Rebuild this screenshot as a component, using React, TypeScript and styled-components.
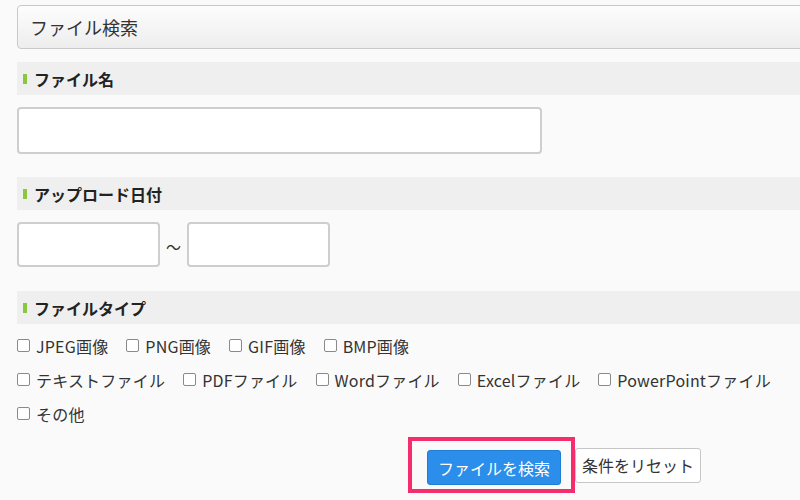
import styled, { createGlobalStyle } from "styled-components";

const GlobalStyle = createGlobalStyle`
  html, body {
    margin: 0;
    padding: 0;
    background: #fafafa;
    overflow: hidden;
  }
  body {
    font-family: "Noto Sans CJK JP", "Noto Sans", sans-serif;
    color: #333;
  }
`;

const Page = styled.div`
  padding: 5px 0 0 17px;
  margin-right: -30px;
`;

const TitleBar = styled.div`
  height: 42px;
  display: flex;
  align-items: center;
  padding-left: 12px;
  border: 1px solid #c9c9c9;
  border-radius: 4px;
  background: linear-gradient(#fdfdfd, #ededed);
  font-size: 18px;
  color: #333;
  margin-bottom: 13px;
`;

const SectionHeader = styled.div<{ $top?: number; $bottom?: number }>`
  height: 33px;
  display: flex;
  align-items: center;
  padding-left: 6px;
  background: #efefef;
  font-size: 16px;
  font-weight: bold;
  color: #222;
  margin-top: ${(p) => p.$top ?? 0}px;
  margin-bottom: ${(p) => p.$bottom ?? 12}px;

  &::before {
    content: "";
    width: 4px;
    height: 10px;
    background: #8cc63f;
    margin-right: 7px;
  }
`;

const TextInput = styled.input<{ $w: number; $h: number }>`
  box-sizing: border-box;
  width: ${(p) => p.$w}px;
  height: ${(p) => p.$h}px;
  border: 2px solid #cecece;
  border-radius: 4px;
  background: #fff;
  display: block;
  outline: none;
`;

const DateRow = styled.div`
  display: flex;
  align-items: center;
  gap: 6px;
`;

const Tilde = styled.span`
  font-size: 15px;
  width: 15px;
  text-align: center;
  padding-top: 4px;
`;

const CheckList = styled.div`
  display: flex;
  flex-direction: column;
  gap: 13px;
`;

const CheckRow = styled.div`
  display: flex;
  align-items: center;
`;

const CheckItem = styled.label`
  display: flex;
  align-items: center;
  gap: 6px;
  margin-right: 18px;
  font-size: 16px;
  height: 21px;
  color: #333;
  white-space: nowrap;
  letter-spacing: 0.2px;
`;

const Box = styled.input`
  appearance: none;
  margin: 0;
  width: 13px;
  height: 13px;
  border: 1px solid #8a8a8a;
  border-radius: 2px;
  background: #fff;
`;

const ButtonRow = styled.div`
  display: flex;
  align-items: center;
  padding-left: 391px;
  margin-top: 13px;
`;

const Highlight = styled.div`
  border: 4px solid #f52d6c;
  padding: 9px 10px 4px 15px;
`;

const Button = styled.button<{ $primary?: boolean }>`
  font-family: inherit;
  font-size: 16px;
  height: 35px;
  padding: 0 ${(p) => (p.$primary ? 10 : 6)}px;
  border-radius: 3px;
  border: 1px solid ${(p) => (p.$primary ? "#1f7fd6" : "#c6c6c6")};
  background: ${(p) => (p.$primary ? "#2b8eea" : "#fff")};
  color: ${(p) => (p.$primary ? "#fff" : "#333")};
  cursor: pointer;
  line-height: 1;
`;

const fileTypeRows = [
  ["JPEG画像", "PNG画像", "GIF画像", "BMP画像"],
  ["テキストファイル", "PDFファイル", "Wordファイル", "Excelファイル", "PowerPointファイル"],
  ["その他"],
];

export default function App() {
  return (
    <>
      <GlobalStyle />
      <Page>
        <TitleBar>ファイル検索</TitleBar>

        <SectionHeader>ファイル名</SectionHeader>
        <TextInput $w={525} $h={47} />

        <SectionHeader $top={23}>アップロード日付</SectionHeader>
        <DateRow>
          <TextInput $w={143} $h={45} />
          <Tilde>～</Tilde>
          <TextInput $w={143} $h={45} />
        </DateRow>

        <SectionHeader $top={24} $bottom={11}>
          ファイルタイプ
        </SectionHeader>
        <CheckList>
          {fileTypeRows.map((row, i) => (
            <CheckRow key={i}>
              {row.map((t) => (
                <CheckItem key={t}>
                  <Box type="checkbox" />
                  {t}
                </CheckItem>
              ))}
            </CheckRow>
          ))}
        </CheckList>

        <ButtonRow>
          <Highlight>
            <Button $primary>ファイルを検索</Button>
          </Highlight>
          <Button>条件をリセット</Button>
        </ButtonRow>
      </Page>
    </>
  );
}
